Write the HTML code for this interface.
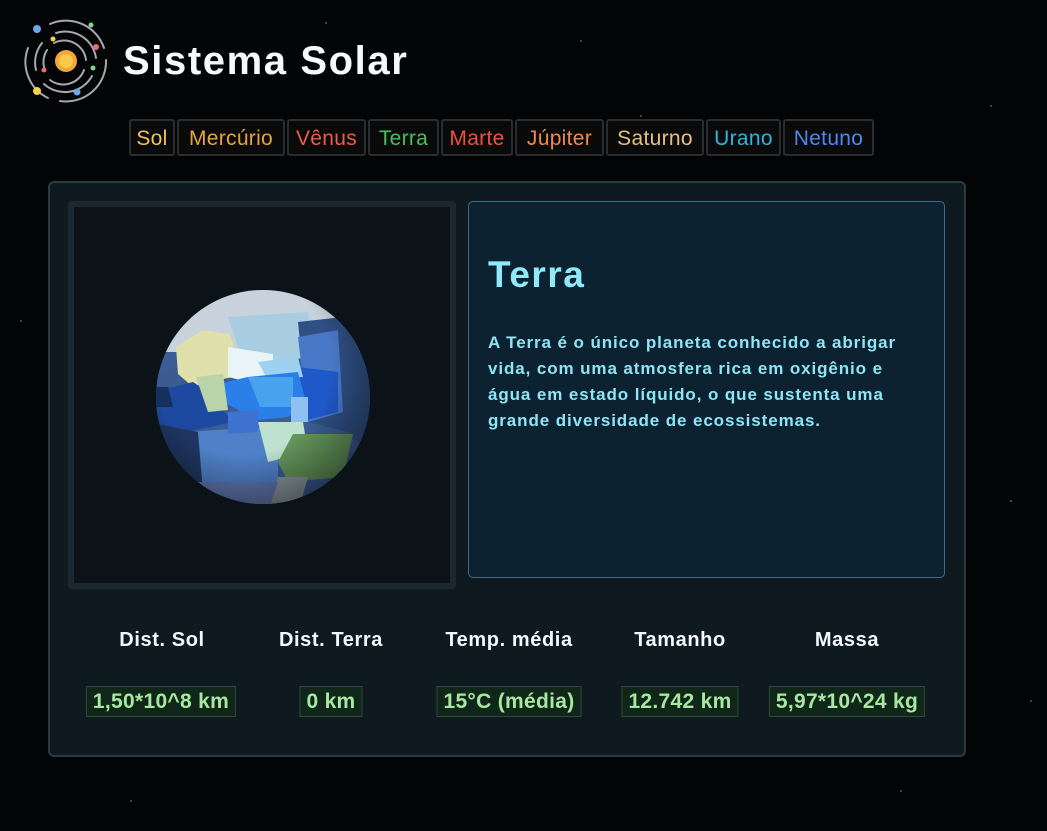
<!DOCTYPE html>
<html><head><meta charset="utf-8">
<style>
*{margin:0;padding:0;box-sizing:border-box}
body{width:1047px;height:831px;overflow:hidden;background:#030405;font-family:"Liberation Sans",sans-serif;position:relative}
.abs{position:absolute}
.title{left:123px;top:39px;font-size:40px;font-weight:bold;color:#f4fbff;letter-spacing:1.6px}
.nav{left:129px;top:119px;display:flex;gap:2px}
.nav span{display:block;height:37px;line-height:35px;border:2px solid #2a2d30;border-radius:3px;font-size:21px;background:#0a0a0a;text-align:center;letter-spacing:0.3px}
.panel{left:48px;top:181px;width:918px;height:576px;background:#0e1920;border:2px solid #2b3a45;border-radius:6px}
.img{left:68px;top:201px;width:388px;height:388px;border:6px solid #1c2831;border-radius:4px;background:#0b1218}
.info{left:468px;top:201px;width:477px;height:377px;background:#0d2230;border:1px solid #3e6d80;border-radius:5px}
.info h1{position:absolute;left:19px;top:52px;font-size:37px;color:#8ee9f8;font-weight:bold;letter-spacing:1.5px}
.info p{position:absolute;left:19px;top:128px;font-size:17px;line-height:26px;color:#8ee5f5;font-weight:bold;white-space:nowrap;letter-spacing:0.9px}
.hd{top:629px;font-size:20px;font-weight:bold;color:#f2f8fb;transform:translateX(-50%);white-space:nowrap;letter-spacing:0.6px}
.val{top:686px;height:31px;line-height:29px;font-size:21px;font-weight:bold;color:#a6e8a0;background:#0f2619;border:1px solid #2f4a3c;padding:0 6px;transform:translateX(-50%);white-space:nowrap;letter-spacing:0.3px}
.star{position:absolute;width:2px;height:2px;background:#555;border-radius:50%}
</style></head><body>
<div class="star" style="left:325px;top:22px"></div>
<div class="star" style="left:580px;top:40px"></div>
<div class="star" style="left:990px;top:105px"></div>
<div class="star" style="left:1010px;top:500px"></div>
<div class="star" style="left:20px;top:320px"></div>
<div class="star" style="left:640px;top:115px"></div>
<div class="star" style="left:900px;top:790px"></div>
<div class="star" style="left:130px;top:800px"></div>
<div class="star" style="left:1030px;top:700px"></div>

<svg class="abs" style="left:20px;top:18px" width="92" height="86" viewBox="0 0 92 86">
<g fill="none" stroke="#a6a8ad" stroke-width="2" stroke-linecap="round">
<path d="M30 6 A40 40 0 0 1 84 30"/><path d="M86 42 A40 40 0 0 1 40 83"/><path d="M28 80 A40 40 0 0 1 8 30"/>
<path d="M36 15 A31 31 0 0 1 76 40"/><path d="M72 58 A31 31 0 0 1 24 66"/><path d="M16 52 A31 31 0 0 1 22 25"/>
<path d="M34 25 A22 22 0 0 1 66 42"/><path d="M64 52 A22 22 0 0 1 30 62"/><path d="M25 52 A22 22 0 0 1 27 32"/>
</g>
<circle cx="46" cy="43" r="11" fill="#f2a53c"/><circle cx="46" cy="43" r="7" fill="#f8c94a"/>
<circle cx="17" cy="11" r="4" fill="#6ea6ec"/><circle cx="71" cy="7" r="2.5" fill="#7fd88f"/>
<circle cx="33" cy="21" r="2.5" fill="#f5d24a"/><circle cx="76" cy="29" r="3" fill="#ee6b6b"/>
<circle cx="73" cy="50" r="2.5" fill="#7fd88f"/><circle cx="24" cy="52" r="2.5" fill="#ee6b6b"/>
<circle cx="17" cy="73" r="4" fill="#f5d24a"/><circle cx="57" cy="74" r="3.5" fill="#6ea6ec"/>
</svg>
<div class="abs title">Sistema Solar</div>
<div class="abs nav">
<span style="color:#f4c25a;width:46px">Sol</span><span style="color:#e9a33a;width:108px">Mercúrio</span><span style="color:#ef5c45;width:79px">Vênus</span><span style="color:#43c25a;width:71px">Terra</span><span style="color:#f0503a;width:72px">Marte</span><span style="color:#ef8a4a;width:89px">Júpiter</span><span style="color:#e6c083;width:98px">Saturno</span><span style="color:#30b4de;width:75px">Urano</span><span style="color:#4f86f2;width:91px">Netuno</span>
</div>

<div class="abs panel"></div>
<div class="abs img"></div>
<svg class="abs" style="left:148px;top:282px" width="230" height="230" viewBox="0 0 230 230">
<defs><clipPath id="c"><circle cx="115" cy="115" r="107"/></clipPath>
<radialGradient id="g" cx="0.4" cy="0.35" r="0.7"><stop offset="0.6" stop-color="#000" stop-opacity="0"/><stop offset="1" stop-color="#000" stop-opacity="0.45"/></radialGradient></defs>
<g clip-path="url(#c)">
<rect width="230" height="230" fill="#3b5c95"/>
<rect width="230" height="70" fill="#c8d2dc"/>
<polygon points="80,35 160,30 165,75 120,80 90,65" fill="#a8cce0"/>
<polygon points="150,40 195,35 230,60 230,180 200,150 160,140" fill="#2f4f85"/>
<polygon points="150,55 190,48 195,130 160,140" fill="#4a78c8"/>
<polygon points="150,85 190,90 190,130 160,138" fill="#1f58c8"/>
<polygon points="0,95 30,85 50,105 0,115" fill="#3c5c90"/>
<polygon points="28,65 55,48 82,52 88,72 85,95 60,100 45,105 30,92" fill="#dfe0aa"/>
<polygon points="80,65 125,72 125,95 100,100 80,95" fill="#e8f4f6"/>
<polygon points="110,80 150,75 155,95 120,98" fill="#9ed0f2"/>
<polygon points="70,102 100,95 150,90 158,120 140,135 110,138 75,120" fill="#2a7fe8"/>
<polygon points="100,95 145,95 145,125 112,125" fill="#49a2ee"/>
<polygon points="143,115 160,115 160,140 143,140" fill="#8ec0f0"/>
<polygon points="0,108 25,105 45,100 60,110 85,140 40,150 0,145" fill="#1d4aa0"/>
<polygon points="48,95 75,92 80,128 60,130" fill="#b8d4a8"/>
<polygon points="0,105 20,105 25,125 0,125" fill="#13305e"/>
<polygon points="40,150 110,145 130,155 130,210 50,215" fill="#4f80c8"/>
<polygon points="80,130 110,128 110,150 80,152" fill="#3e72d0"/>
<polygon points="0,140 50,150 55,210 0,205" fill="#1f3560"/>
<polygon points="110,140 155,140 160,170 120,180" fill="#bfe2d0"/>
<polygon points="145,152 205,152 195,195 140,200 130,180" fill="#64965c"/>
<polygon points="130,195 160,195 150,230 120,230" fill="#8a98a0"/>
<polygon points="50,200 130,200 120,230 50,230" fill="#6078b0"/>
</g>
<circle cx="115" cy="115" r="107" fill="url(#g)"/>
</svg>

<div class="abs info">
<h1>Terra</h1>
<p>A Terra é o único planeta conhecido a abrigar<br>vida, com uma atmosfera rica em oxigênio e<br>água em estado líquido, o que sustenta uma<br>grande diversidade de ecossistemas.</p>
</div>

<div class="abs hd" style="left:162px">Dist. Sol</div>
<div class="abs hd" style="left:331px">Dist. Terra</div>
<div class="abs hd" style="left:509px">Temp. média</div>
<div class="abs hd" style="left:680px">Tamanho</div>
<div class="abs hd" style="left:847px">Massa</div>
<div class="abs val" style="left:161px">1,50*10^8 km</div>
<div class="abs val" style="left:331px">0 km</div>
<div class="abs val" style="left:509px">15°C (média)</div>
<div class="abs val" style="left:680px">12.742 km</div>
<div class="abs val" style="left:847px">5,97*10^24 kg</div>
</body></html>
